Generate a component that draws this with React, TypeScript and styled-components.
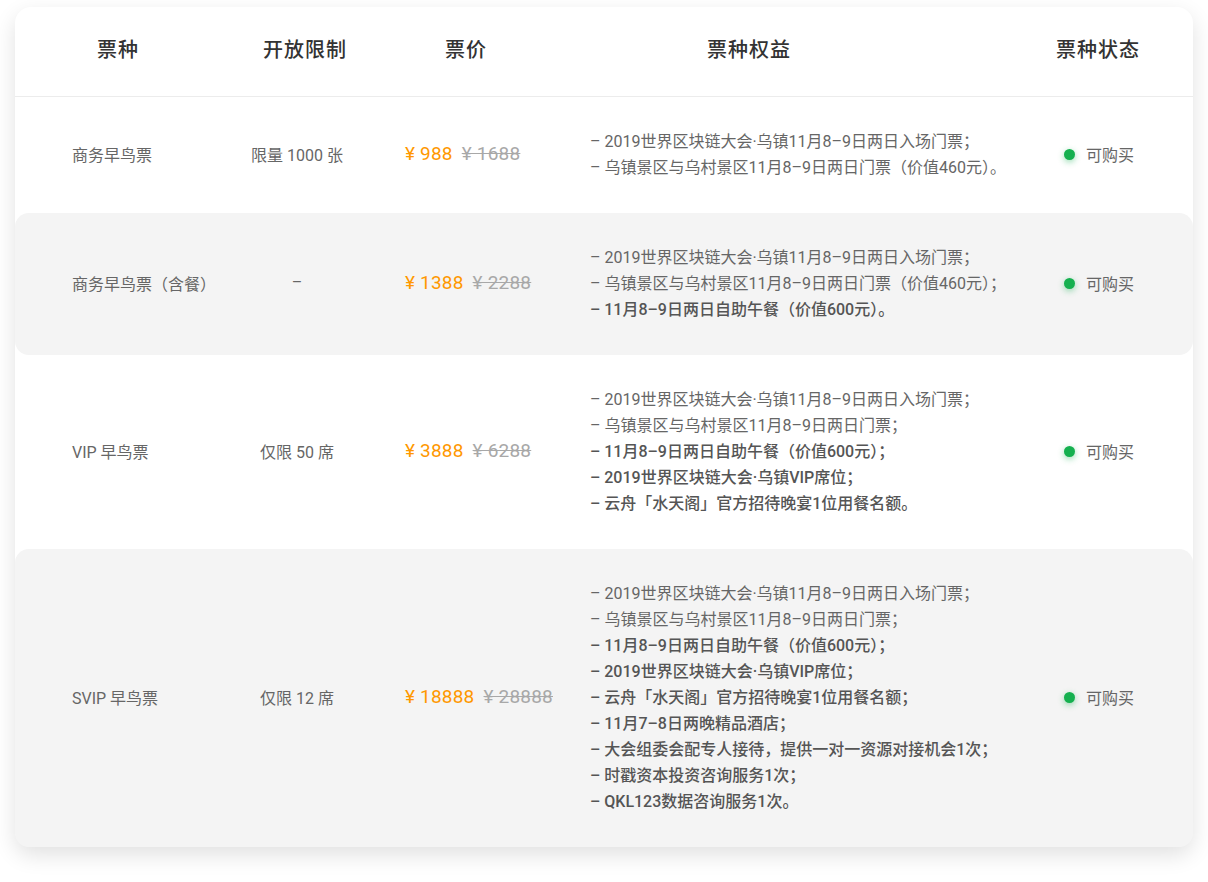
import React from "react";
import styled, { createGlobalStyle } from "styled-components";

const Global = createGlobalStyle`
  html, body { margin: 0; padding: 0; background: #fff; }
  body { font-family: Roboto, "Noto Sans CJK SC", sans-serif; }
`;

const Page = styled.div`
  padding: 7px 15px 30px 15px;
`;

const Card = styled.div`
  width: 1178px;
  background: #fff;
  border-radius: 16px;
  box-shadow: 0 8px 22px rgba(0, 0, 0, 0.12);
`;

const HeaderRow = styled.div`
  display: grid;
  grid-template-columns: 206px 168px 154px 412px 1fr;
  height: 83px;
  padding-bottom: 6px;
  align-items: center;
  border-bottom: 1px solid #ececec;
`;

const HeadCell = styled.div<{ $shift?: number }>`
  text-align: center;
  font-size: 20px;
  font-weight: 500;
  color: #333;
  letter-spacing: 1px;
  padding-left: ${(p) => p.$shift ?? 0}px;
`;

const Row = styled.div<{ $gray?: boolean }>`
  display: grid;
  grid-template-columns: 192px 180px 150px 468px 1fr;
  align-items: center;
  padding: 32px 0;
  border-radius: ${(p) => (p.$gray ? "14px" : "0")};
  background: ${(p) => (p.$gray ? "#f4f4f4" : "transparent")};
`;

const NameCell = styled.div`
  padding-left: 57px;
  padding-bottom: 3px;
  font-size: 16px;
  color: #666;
  white-space: nowrap;
`;

const Cell = styled.div`
  text-align: center;
  padding-bottom: 3px;
  font-size: 16px;
  color: #666;
`;

const Price = styled.div`
  display: flex;
  align-items: baseline;
  gap: 9px;
  padding-left: 18px;
  padding-bottom: 3px;
  font-size: 19px;
  letter-spacing: 0.2px;
  white-space: nowrap;
`;

const Now = styled.span`
  color: #ff9800;
`;

const Old = styled.span`
  color: #a8a8a8;
  text-decoration: line-through;
`;

const Benefits = styled.ul`
  list-style: none;
  margin: 0;
  padding: 0 0 0 53px;
`;

const Benefit = styled.li<{ $strong?: boolean }>`
  font-size: 16px;
  line-height: 26px;
  white-space: nowrap;
  color: ${(p) => (p.$strong ? "#555" : "#666")};
  font-weight: ${(p) => (p.$strong ? 500 : 400)};
`;

const Status = styled.div`
  display: flex;
  justify-content: center;
  align-items: center;
  gap: 11px;
  padding-bottom: 2px;
  font-size: 16px;
  color: #666;
`;

const Dot = styled.span`
  width: 11px;
  height: 11px;
  border-radius: 50%;
  background: #15b04f;
  box-shadow: 0 2px 6px rgba(21, 176, 79, 0.45);
`;

const base = ["2019世界区块链大会·乌镇11月8–9日两日入场门票；"];

const rows = [
  {
    name: "商务早鸟票",
    limit: "限量 1000 张",
    now: "¥ 988",
    old: "¥ 1688",
    gray: false,
    items: [...base, "乌镇景区与乌村景区11月8–9日两日门票（价值460元）。"],
  },
  {
    name: "商务早鸟票（含餐）",
    limit: "–",
    now: "¥ 1388",
    old: "¥ 2288",
    gray: true,
    items: [
      ...base,
      "乌镇景区与乌村景区11月8–9日两日门票（价值460元）；",
      "11月8–9日两日自助午餐（价值600元）。",
    ],
  },
  {
    name: "VIP 早鸟票",
    limit: "仅限 50 席",
    now: "¥ 3888",
    old: "¥ 6288",
    gray: false,
    items: [
      ...base,
      "乌镇景区与乌村景区11月8–9日两日门票；",
      "11月8–9日两日自助午餐（价值600元）；",
      "2019世界区块链大会·乌镇VIP席位；",
      "云舟「水天阁」官方招待晚宴1位用餐名额。",
    ],
  },
  {
    name: "SVIP 早鸟票",
    limit: "仅限 12 席",
    now: "¥ 18888",
    old: "¥ 28888",
    gray: true,
    items: [
      ...base,
      "乌镇景区与乌村景区11月8–9日两日门票；",
      "11月8–9日两日自助午餐（价值600元）；",
      "2019世界区块链大会·乌镇VIP席位；",
      "云舟「水天阁」官方招待晚宴1位用餐名额；",
      "11月7–8日两晚精品酒店；",
      "大会组委会配专人接待，提供一对一资源对接机会1次；",
      "时戳资本投资咨询服务1次；",
      "QKL123数据咨询服务1次。",
    ],
  },
];

export default function App() {
  return (
    <Page>
      <Global />
      <Card>
        <HeaderRow>
          <HeadCell>票种</HeadCell>
          <HeadCell>开放限制</HeadCell>
          <HeadCell>票价</HeadCell>
          <HeadCell>票种权益</HeadCell>
          <HeadCell $shift={48}>票种状态</HeadCell>
        </HeaderRow>
        {rows.map((r) => (
          <Row key={r.name} $gray={r.gray}>
            <NameCell>{r.name}</NameCell>
            <Cell>{r.limit}</Cell>
            <Price>
              <Now>{r.now}</Now>
              <Old>{r.old}</Old>
            </Price>
            <Benefits>
              {r.items.map((t, i) => (
                <Benefit key={i} $strong={i >= 2}>
                  – {t}
                </Benefit>
              ))}
            </Benefits>
            <Status>
              <Dot />
              可购买
            </Status>
          </Row>
        ))}
      </Card>
    </Page>
  );
}
